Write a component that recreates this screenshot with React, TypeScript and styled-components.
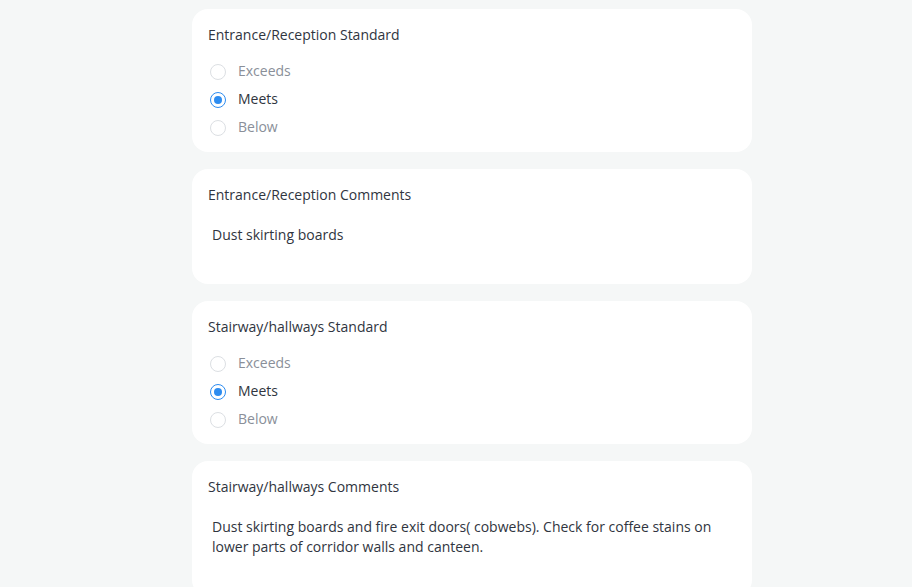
import React from "react";
import styled, { createGlobalStyle } from "styled-components";

const GlobalStyle = createGlobalStyle`
  html, body {
    margin: 0;
    padding: 0;
    background: #f5f7f7;
    font-family: "Open Sans", "Noto Sans", sans-serif;
  }
`;

type Level = "Exceeds" | "Meets" | "Below";

const levels: Level[] = ["Exceeds", "Meets", "Below"];

const sections = [
  {
    area: "Entrance/Reception",
    value: "Meets" as Level,
    comment: "Dust skirting boards",
  },
  {
    area: "Stairway/hallways",
    value: "Meets" as Level,
    comment:
      "Dust skirting boards and fire exit doors( cobwebs). Check for coffee stains on lower parts of corridor walls and canteen.",
  },
];

function App() {
  return (
    <>
      <GlobalStyle />
      <Page>
        <Column>
          {sections.map((s) => (
            <React.Fragment key={s.area}>
              <Card>
                <Title>{s.area} Standard</Title>
                <RadioGroup>
                  {levels.map((l) => (
                    <RadioRow key={l}>
                      <RadioCircle $checked={l === s.value} />
                      <RadioLabel $checked={l === s.value}>{l}</RadioLabel>
                    </RadioRow>
                  ))}
                </RadioGroup>
              </Card>
              <CommentCard>
                <Title>{s.area} Comments</Title>
                <CommentText>{s.comment}</CommentText>
              </CommentCard>
            </React.Fragment>
          ))}
        </Column>
      </Page>
    </>
  );
}

export default App;

const Page = styled.main`
  width: 100%;
  min-height: 100vh;
  padding: 9px 0 0 192px;
  box-sizing: border-box;
`;

const Column = styled.div`
  width: 560px;
  display: flex;
  flex-direction: column;
  gap: 17px;
`;

const Card = styled.section`
  background: #ffffff;
  border-radius: 16px;
  padding: 16px 16px 10px;
  box-sizing: border-box;
  display: flex;
  flex-direction: column;
  gap: 12px;
`;

const CommentCard = styled(Card)`
  gap: 20px;
  padding-bottom: 39px;
`;

const Title = styled.div`
  font-size: 14px;
  line-height: 20px;
  color: #303540;
`;

const RadioGroup = styled.div`
  display: flex;
  flex-direction: column;
  padding-top: 1px;
`;

const RadioRow = styled.label`
  height: 28px;
  display: flex;
  align-items: center;
  gap: 12px;
  padding-left: 2px;
`;

const RadioCircle = styled.span<{ $checked: boolean }>`
  width: 16px;
  height: 16px;
  box-sizing: border-box;
  border-radius: 50%;
  border: 1px solid ${(p) => (p.$checked ? "#2d8cf0" : "#dcdfe3")};
  background: #ffffff;
  display: flex;
  align-items: center;
  justify-content: center;

  &::after {
    content: "";
    width: 8px;
    height: 8px;
    border-radius: 50%;
    background: #2d8cf0;
    display: ${(p) => (p.$checked ? "block" : "none")};
  }
`;

const RadioLabel = styled.span<{ $checked: boolean }>`
  font-size: 14px;
  line-height: 16px;
  margin-top: -2px;
  color: ${(p) => (p.$checked ? "#303540" : "#8a8f99")};
`;

const CommentText = styled.p`
  margin: 0;
  padding: 0 4px;
  font-size: 14px;
  line-height: 20px;
  color: #303540;
`;
